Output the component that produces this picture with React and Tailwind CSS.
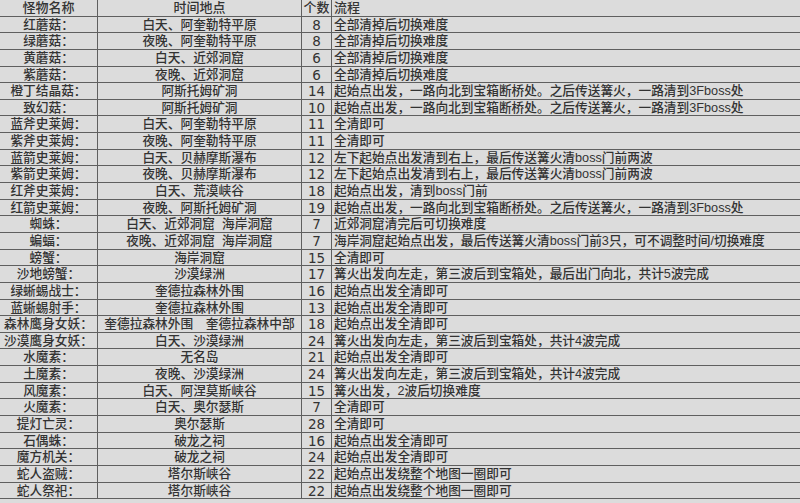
import React from 'react';

const ROUTE_MINE = '起始点出发，一路向北到宝箱断桥处。之后传送篝火，一路清到3Fboss处';
const ROUTE_FALLS = '左下起始点出发清到右上，最后传送篝火清boss门前两波';
const ROUTE_DESERT4 = '篝火出发向左走，第三波后到宝箱处，共计4波完成';
const CLEAR = '全清即可';
const START_CLEAR = '起始点出发全清即可';
const SWAP = '全部清掉后切换难度';
const LOOP = '起始点出发绕整个地图一圈即可';

const rows = [
  ['红蘑菇：', '白天、阿奎勒特平原', 8, SWAP],
  ['绿蘑菇：', '夜晚、阿奎勒特平原', 8, SWAP],
  ['黄蘑菇：', '白天、近郊洞窟', 6, SWAP],
  ['紫蘑菇：', '夜晚、近郊洞窟', 6, SWAP],
  ['橙丁结晶菇：', '阿斯托姆矿洞', 14, ROUTE_MINE],
  ['致幻菇：', '阿斯托姆矿洞', 10, ROUTE_MINE],
  ['蓝斧史莱姆：', '白天、阿奎勒特平原', 11, CLEAR],
  ['紫斧史莱姆：', '夜晚、阿奎勒特平原', 11, CLEAR],
  ['蓝箭史莱姆：', '白天、贝赫摩斯瀑布', 12, ROUTE_FALLS],
  ['紫箭史莱姆：', '夜晚、贝赫摩斯瀑布', 12, ROUTE_FALLS],
  ['红斧史莱姆：', '白天、荒漠峡谷', 18, '起始点出发，清到boss门前'],
  ['红箭史莱姆：', '夜晚、阿斯托姆矿洞', 19, ROUTE_MINE],
  ['蜘蛛：', '白天、近郊洞窟  海岸洞窟', 7, '近郊洞窟清完后可切换难度'],
  ['蝙蝠：', '夜晚、近郊洞窟  海岸洞窟', 7, '海岸洞窟起始点出发，最后传送篝火清boss门前3只，可不调整时间/切换难度'],
  ['螃蟹：', '海岸洞窟', 15, CLEAR],
  ['沙地螃蟹：', '沙漠绿洲', 17, '篝火出发向左走，第三波后到宝箱处，最后出门向北，共计5波完成'],
  ['绿蜥蜴战士：', '奎德拉森林外围', 16, START_CLEAR],
  ['蓝蜥蜴射手：', '奎德拉森林外围', 13, START_CLEAR],
  ['森林鹰身女妖：', '奎德拉森林外围　奎德拉森林中部', 18, START_CLEAR],
  ['沙漠鹰身女妖：', '白天、沙漠绿洲', 24, ROUTE_DESERT4],
  ['水魔素：', '无名岛', 21, START_CLEAR],
  ['土魔素：', '夜晚、沙漠绿洲', 24, ROUTE_DESERT4],
  ['风魔素：', '白天、阿涅莫斯峡谷', 15, '篝火出发，2波后切换难度'],
  ['火魔素：', '白天、奥尔瑟斯', 7, CLEAR],
  ['提灯亡灵：', '奥尔瑟斯', 28, CLEAR],
  ['石偶蛛：', '破龙之祠', 16, START_CLEAR],
  ['魔方机关：', '破龙之祠', 24, START_CLEAR],
  ['蛇人盗贼：', '塔尔斯峡谷', 22, LOOP],
  ['蛇人祭祀：', '塔尔斯峡谷', 22, LOOP],
];

const rowCls =
  'grid grid-cols-[98px_204px_30px_1fr] h-[16.65px] text-[12.7px] leading-[16px] font-medium text-[#333333]';
const cell = 'flex items-center border-r border-[#5f5f5f] overflow-hidden whitespace-pre';
const numCell = `${cell} justify-center text-[13.5px] font-normal font-['DejaVu_Sans',sans-serif]`;

export default function App() {
  return (
    <div
      className="w-[800px] h-[503px] bg-[#dcdcdc] overflow-hidden"
      style={{ fontFamily: '"Liberation Sans", "Noto Sans CJK SC", sans-serif' }}
    >
      {/* header */}
      <div className={`${rowCls} h-[16.5px] border-b border-[#5f5f5f] text-[13px]`}>
        <div className={`${cell} justify-center`}>怪物名称</div>
        <div className={`${cell} justify-center`}>时间地点</div>
        <div className={`${cell} justify-center`}>个数</div>
        <div className="flex items-center pl-[2px]">流程</div>
      </div>
      {rows.map(([name, place, count, route], i) => (
        <div key={i} className={`${rowCls} border-b border-[#5f5f5f]`}>
          <div className={`${cell} justify-center`}>{name}</div>
          <div className={`${cell} justify-center`}>{place}</div>
          <div className={numCell}>{count}</div>
          <div className="flex items-center pl-[2px] whitespace-pre">{route}</div>
        </div>
      ))}
    </div>
  );
}
